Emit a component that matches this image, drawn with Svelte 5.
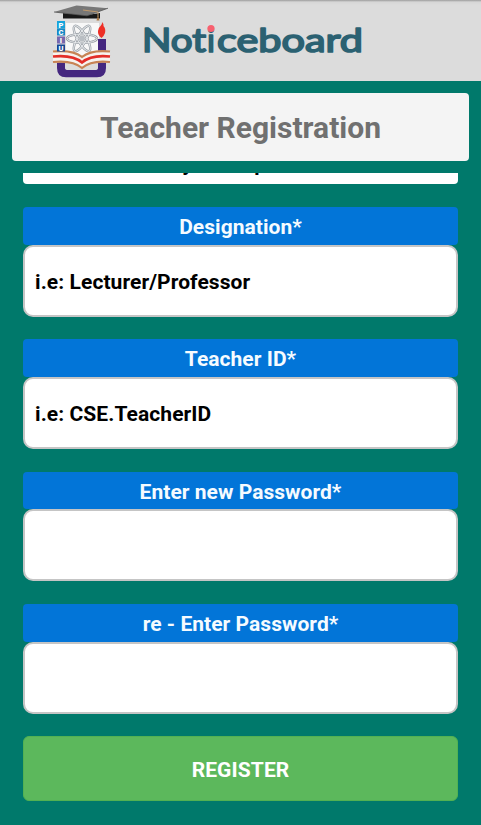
<script>
  const fields = [
    { label: 'Designation*', hint: 'i.e: Lecturer/Professor', type: 'text' },
    { label: 'Teacher ID*', hint: 'i.e: CSE.TeacherID', type: 'text' },
    { label: 'Enter new Password*', hint: '', type: 'password' },
    { label: 're - Enter Password*', hint: '', type: 'password' }
  ];
</script>

<div class="screen">
  <header>
    <svg class="crest" width="62" height="76" viewBox="0 0 62 76">
      <!-- emblem panel -->
      <rect x="13" y="17" width="33" height="32" fill="#f8f8f8" />
      <!-- purple base and candle -->
      <path d="M4 54H12V62Q12 64 15 64H42Q45 64 45 62V33H53V62Q53 71.300 44 71.300H13Q4 71.300 4 62Z" fill="#45277f" />
      <path d="M49 16Q51 18 50.500 20Q53 23 52 27Q51 30 48.500 32Q44.500 29 45 25Q45 22 47.500 20Q49.500 18 49 16Z" fill="#ee2f26" />
      <!-- orbits -->
      <g transform="translate(29 32.500)" fill="none" stroke="#969ca3" stroke-width="2.4">
        <ellipse rx="15" ry="4.500" />
        <ellipse rx="14.500" ry="4.500" transform="rotate(60)" />
        <ellipse rx="14.500" ry="4.500" transform="rotate(120)" />
        <circle r="3" fill="#b9bec3" stroke="none" />
      </g>
      <g transform="translate(29 32.500)" fill="none" stroke="#e7eaec" stroke-width="1">
        <ellipse rx="15" ry="4.500" />
        <ellipse rx="14.500" ry="4.500" transform="rotate(60)" />
        <ellipse rx="14.500" ry="4.500" transform="rotate(120)" />
      </g>
      <!-- open book -->
      <path d="M0 45Q20 43 29 50Q38 43 57 45V57Q38 55 29 63Q20 55 0 57Z" fill="#f7f3ef" />
      <path d="M0 45.500Q20 43.500 29 51Q38 43.500 57 45.500" fill="none" stroke="#c78354" stroke-width="2.2" />
      <path d="M0 50.500Q20 48.500 29 56.500Q38 48.500 57 50.500" fill="none" stroke="#e32e29" stroke-width="2.6" />
      <path d="M0 56Q20 54 29 62Q38 54 57 56" fill="none" stroke="#c78354" stroke-width="2.2" />
      <!-- monogram tiles -->
      <g font-family="Roboto, sans-serif" font-weight="900" font-size="7.5" fill="#fff" text-anchor="middle">
        <rect x="4" y="15" width="8" height="7.500" fill="#16a4dc" /><text x="8" y="21.500">P</text>
        <rect x="4" y="22.500" width="8" height="7" fill="#1689c6" /><text x="8" y="29">C</text>
        <rect x="4" y="30.500" width="8" height="7" fill="#7767ae" /><text x="8" y="37">I</text>
        <rect x="4" y="38.500" width="8" height="7" fill="#154793" /><text x="8" y="45">U</text>
      </g>
      <!-- mortarboard -->
      <path d="M10 7L34 9L47 7V12.500H10Z" fill="#181818" />
      <path d="M1 6L23.500 -.5L55 2.200L34 9.800Z" fill="#777" />
      <path d="M1 6L34 9.800L55 2.200" fill="none" stroke="#555" stroke-width=".8" />
      <path d="M30 4L45 6V11" fill="none" stroke="#c19a6d" />
      <path d="M45 9.500L43.500 14.500H46.500Z" fill="#a87745" />
    </svg>
    <svg class="wordmark" width="230" height="50" viewBox="0 0 230 50">
      <text y="33.500"><tspan x="1" textLength="64" lengthAdjust="spacingAndGlyphs">Not</tspan><tspan x="66">i</tspan><tspan x="76" textLength="146" lengthAdjust="spacingAndGlyphs">ceboard</tspan></text>
      <ellipse cx="70" cy="10.600" rx="3.600" ry="3.500" />
    </svg>
  </header>

  <h1><span>Teacher Registration</span></h1>

  <main>
    <div class="department"><span>Select your Department</span></div>
    {#each fields as field}
      <label>
        <span class="caption">{field.label}</span>
        <input type={field.type} placeholder={field.hint} />
      </label>
    {/each}
    <button type="button">REGISTER</button>
  </main>
</div>

<style>
  .screen {
    width: 481px;
    height: 825px;
    overflow: hidden;
    box-sizing: border-box;
    background: #00796b;
    font-family: Roboto, sans-serif;
    font-weight: 700;
  }
  header {
    height: 81px;
    box-sizing: border-box;
    display: flex;
    align-items: flex-start;
    padding: 6px 0 0 53px;
    background: linear-gradient(#9c9c9c 0, #d6d6d6 2px, #dcdcdc 5px);
  }
  .crest, .wordmark { display: block; flex: none; overflow: visible; }
  .wordmark { margin: 12px 0 0 26px; }
  .wordmark text {
    font: 400 33px Lato, sans-serif;
    font-variant-ligatures: none;
    fill: #2b6172;
    stroke: #2b6172;
    stroke-width: 1.7px;
    stroke-linejoin: round;
  }
  .wordmark ellipse { fill: #f7606f; }
  h1 {
    height: 68px;
    box-sizing: border-box;
    padding-top: 2px;
    margin: 12px 12px 0;
    display: flex;
    align-items: center;
    justify-content: center;
    border-radius: 4px;
    background: #f4f4f4;
    color: #707070;
    font-size: 30px;
    line-height: 36px;
  }
  main {
    height: 652px;
    margin: 12px 23px 0;
    overflow: hidden;
    display: flex;
    flex-direction: column;
  }
  .department {
    flex: none;
    height: 11px;
    margin-bottom: 23px;
    border-radius: 0 0 4px 4px;
    background: #fff;
    color: #000;
    overflow: hidden;
    display: flex;
    align-items: flex-end;
    justify-content: center;
    box-sizing: border-box;
    padding: 0 22px 7px 0;
    font-size: 21px;
    line-height: 25px;
  }
  label { display: flex; flex-direction: column; margin-bottom: 22.5px; }
  .caption {
    height: 37.8px;
    border-radius: 4px;
    background: #0275d8;
    color: #f5fbff;
    text-align: center;
    font-size: 21px;
    letter-spacing: .04px;
    line-height: 40px;
  }
  input {
    width: 100%;
    height: 72px;
    box-sizing: border-box;
    border: 2px solid #c5c5c5;
    border-radius: 10px;
    background: #fff;
    padding: 2px 10px 0;
    font: inherit;
    font-size: 21px;
    letter-spacing: .08px;
    outline: none;
  }
  input::placeholder { color: #000; opacity: 1; }
  button {
    flex: none;
    height: 65px;
    border: 1px solid #52b152;
    border-radius: 6px;
    background: #5cb85c;
    color: #fff;
    font: inherit;
    font-size: 21px;
    letter-spacing: .1px;
    padding: 2px 0 0;
  }
</style>
